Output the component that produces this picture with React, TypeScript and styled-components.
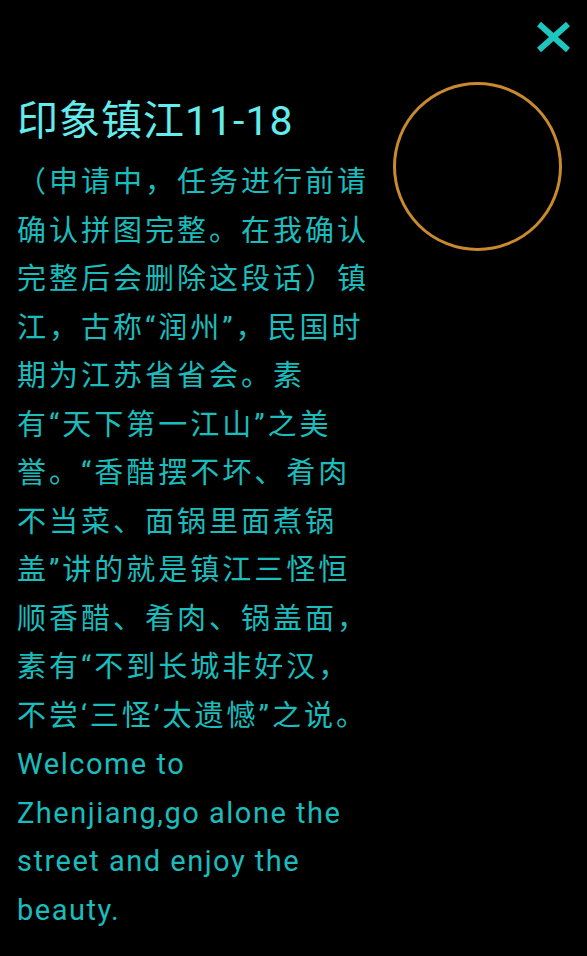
import React from "react";
import styled, { createGlobalStyle } from "styled-components";

const Global = createGlobalStyle`
  html, body { margin: 0; padding: 0; background: #000; }
  body { width: 587px; height: 956px; overflow: hidden; }
`;

const Screen = styled.div`
  width: 587px;
  height: 956px;
  background: #000;
  display: flex;
  flex-direction: column;
  box-sizing: border-box;
  font-family: Roboto, "Noto Sans CJK SC", sans-serif;
`;

const TopBar = styled.div`
  display: flex;
  justify-content: flex-end;
  padding: 22px 16px 0 0;
  height: 30px;
`;

const CloseButton = styled.button`
  width: 35px;
  height: 30px;
  padding: 0;
  border: none;
  background: transparent;
  display: flex;
  cursor: pointer;
`;

const Content = styled.div`
  display: flex;
  align-items: flex-start;
  padding-left: 17px;
`;

const TextColumn = styled.div`
  width: 370px;
  flex: none;
  padding-top: 44px;
`;

const Title = styled.h1`
  margin: 0;
  font-size: 41px;
  font-weight: 400;
  line-height: 50px;
  color: #62ecec;
  letter-spacing: 1px;
`;

const Body = styled.div`
  margin-top: 12px;
  font-size: 29px;
  line-height: 48.5px;
  letter-spacing: 3px;
  color: #1bbcbc;
  white-space: pre;
`;

const Latin = styled.div`
  letter-spacing: 1.5px;
`;

const Ring = styled.div`
  margin-top: 30px;
  margin-left: 6px;
  width: 169px;
  height: 169px;
  box-sizing: border-box;
  border-radius: 50%;
  border: 3px solid #c88a2c;
  flex: none;
`;

const lines = [
  "（申请中，任务进行前请",
  "确认拼图完整。在我确认",
  "完整后会删除这段话）镇",
  "江，古称“润州”，民国时",
  "期为江苏省省会。素",
  "有“天下第一江山”之美",
  "誉。“香醋摆不坏、肴肉",
  "不当菜、面锅里面煮锅",
  "盖”讲的就是镇江三怪恒",
  "顺香醋、肴肉、锅盖面，",
  "素有“不到长城非好汉，",
  "不尝‘三怪’太遗憾”之说。",
];

const latin = ["Welcome to", "Zhenjiang,go alone the", "street and enjoy the", "beauty."];

export default function App() {
  return (
    <>
      <Global />
      <Screen>
        <TopBar>
          <CloseButton aria-label="close">
            <svg width="35" height="30" viewBox="0 0 35 30">
              <path d="M3 2 L32 28 M32 2 L3 28" stroke="#1ec6c0" strokeWidth="6" />
            </svg>
          </CloseButton>
        </TopBar>
        <Content>
          <TextColumn>
            <Title>印象镇江11-18</Title>
            <Body>
              {lines.map((l) => (
                <div key={l}>{l}</div>
              ))}
              {latin.map((l) => (
                <Latin key={l}>{l}</Latin>
              ))}
            </Body>
          </TextColumn>
          <Ring />
        </Content>
      </Screen>
    </>
  );
}
